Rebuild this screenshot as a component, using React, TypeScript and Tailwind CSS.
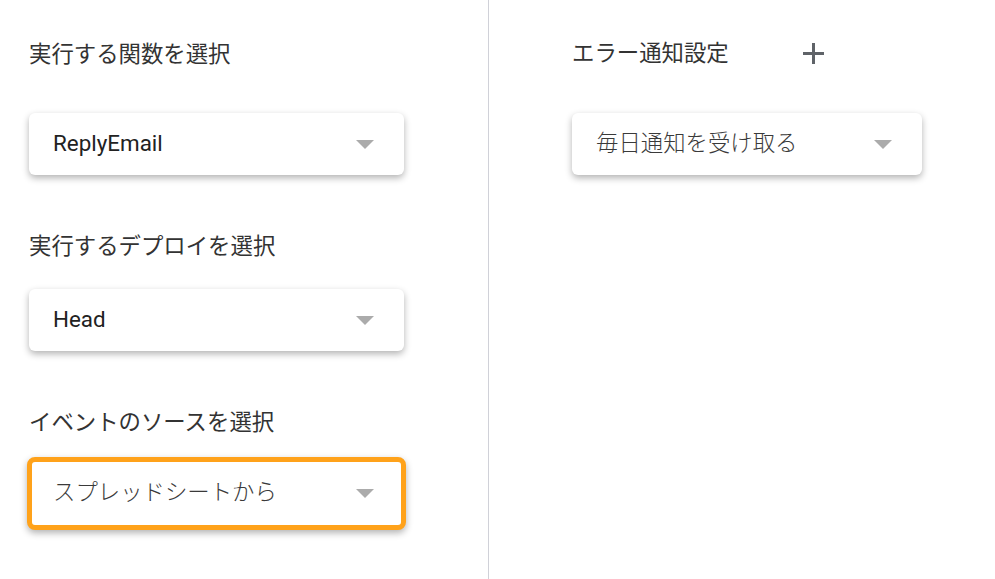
const font = { fontFamily: 'Roboto, "Noto Sans CJK JP", sans-serif' };

function Caret() {
  return (
    <svg width="18" height="9" viewBox="0 0 18 9" className="shrink-0">
      <path d="M0 0 L18 0 L9 9 Z" fill="#ababab" />
    </svg>
  );
}

function SelectBox({
  value,
  muted,
  className,
}: {
  value: string;
  muted?: boolean;
  className: string;
}) {
  return (
    <div
      className={`flex items-center justify-between bg-white rounded-[6px] pl-6 pr-[30px] shadow-[0_3px_7px_rgba(0,0,0,0.3)] ${className}`}
    >
      <span
        className={`text-[22.4px] leading-none -mt-[2px] ${muted ? "text-[#3a3a3a] font-light" : "text-[#222222]"}`}
      >
        {value}
      </span>
      <Caret />
    </div>
  );
}

function Label({ children, className }: { children: string; className: string }) {
  return (
    <div className={`h-[30px] leading-[30px] text-[22.4px] text-[#333333] ${className}`}>
      {children}
    </div>
  );
}

export default function App() {
  return (
    <div className="flex h-[579px] w-[995px] bg-white" style={font}>
      {/* Left: trigger settings */}
      <div className="w-[489px] shrink-0 border-r border-[#d0d1d8] pl-[29px] pt-[39px] flex flex-col">
        <Label className="">実行する関数を選択</Label>
        <SelectBox value="ReplyEmail" className="mt-[44px] w-[375px] h-[62px]" />

        <Label className="mt-[56px]">実行するデプロイを選択</Label>
        <SelectBox value="Head" className="mt-[28px] w-[375px] h-[62px]" />

        <Label className="mt-[56px]">イベントのソースを選択</Label>
        <SelectBox
          value="スプレッドシートから"
          muted
          className="mt-[20px] -ml-[2px] w-[379px] h-[73px] border-[5px] border-[#ffa21a] rounded-[8px] !pl-[21px] !pr-[27px]"
        />
      </div>

      {/* Right: error notification */}
      <div className="flex-1 pl-[83px] pt-[38px] flex flex-col">
        <div className="flex items-center">
          <Label className="">エラー通知設定</Label>
          <button className="ml-[74px] w-[21px] h-[21px] flex items-center justify-center">
            <svg width="21" height="21" viewBox="0 0 21 21">
              <path d="M10.5 0 V21 M0 10.5 H21" stroke="#5f6368" strokeWidth="3" />
            </svg>
          </button>
        </div>
        <SelectBox
          value="毎日通知を受け取る"
          muted
          className="mt-[45px] w-[350px] h-[62px]"
        />
      </div>
    </div>
  );
}
